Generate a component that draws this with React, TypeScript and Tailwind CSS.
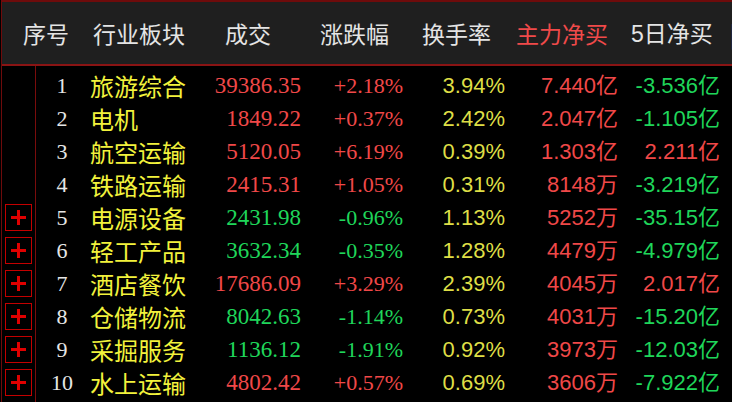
import React from "react";

type Row = {
  n: number;
  name: string;
  vol: string;
  chg: string;
  turn: string;
  main: string;
  mainUp: boolean;
  five: string;
  fiveUp: boolean;
  plus: boolean;
};

const rows: Row[] = [
  { n: 1, name: "旅游综合", vol: "39386.35", chg: "+2.18%", turn: "3.94%", main: "7.440亿", mainUp: true, five: "-3.536亿", fiveUp: false, plus: false },
  { n: 2, name: "电机", vol: "1849.22", chg: "+0.37%", turn: "2.42%", main: "2.047亿", mainUp: true, five: "-1.105亿", fiveUp: false, plus: false },
  { n: 3, name: "航空运输", vol: "5120.05", chg: "+6.19%", turn: "0.39%", main: "1.303亿", mainUp: true, five: "2.211亿", fiveUp: true, plus: false },
  { n: 4, name: "铁路运输", vol: "2415.31", chg: "+1.05%", turn: "0.31%", main: "8148万", mainUp: true, five: "-3.219亿", fiveUp: false, plus: false },
  { n: 5, name: "电源设备", vol: "2431.98", chg: "-0.96%", turn: "1.13%", main: "5252万", mainUp: true, five: "-35.15亿", fiveUp: false, plus: true },
  { n: 6, name: "轻工产品", vol: "3632.34", chg: "-0.35%", turn: "1.28%", main: "4479万", mainUp: true, five: "-4.979亿", fiveUp: false, plus: true },
  { n: 7, name: "酒店餐饮", vol: "17686.09", chg: "+3.29%", turn: "2.39%", main: "4045万", mainUp: true, five: "2.017亿", fiveUp: true, plus: true },
  { n: 8, name: "仓储物流", vol: "8042.63", chg: "-1.14%", turn: "0.73%", main: "4031万", mainUp: true, five: "-15.20亿", fiveUp: false, plus: true },
  { n: 9, name: "采掘服务", vol: "1136.12", chg: "-1.91%", turn: "0.92%", main: "3973万", mainUp: true, five: "-12.03亿", fiveUp: false, plus: true },
  { n: 10, name: "水上运输", vol: "4802.42", chg: "+0.57%", turn: "0.69%", main: "3606万", mainUp: true, five: "-7.922亿", fiveUp: false, plus: true },
];

const cjk = "font-['Noto_Sans_CJK_SC',sans-serif]";
const serif = "font-['Liberation_Serif','Noto_Sans_CJK_SC',serif]";
const sans = "font-['Liberation_Sans','Noto_Sans_CJK_SC',sans-serif]";

function PlusBox() {
  return (
    <div className="relative w-[27px] h-[27px] border border-[#c40000]">
      <span className="absolute left-[5px] top-[11px] w-[15px] h-[3px] bg-[#e00000]" />
      <span className="absolute left-[11px] top-[5px] w-[3px] h-[15px] bg-[#e00000]" />
    </div>
  );
}

export default function App() {
  const red = "text-[#f04848]";
  const green = "text-[#1fd65a]";
  return (
    <div className="w-[732px] h-[402px] bg-black overflow-hidden">
      <div className="ml-px h-full flex flex-col border-l border-t-2 border-[#6e0b0b]">
        {/* header */}
        <div
          className={`h-[64px] shrink-0 bg-[#1f1f1f] border-b-2 border-[#8a1414] flex items-center whitespace-nowrap text-[23px] leading-none text-[#e4e4e4] ${cjk}`}
        >
          <span className="w-[21px] shrink-0" />
          <span className="w-[70px] shrink-0">序号</span>
          <span className="w-[132px] shrink-0">行业板块</span>
          <span className="w-[95px] shrink-0">成交</span>
          <span className="w-[102px] shrink-0">涨跌幅</span>
          <span className="w-[94px] shrink-0">换手率</span>
          <span className="w-[115px] shrink-0 text-[#f04a4a]">主力净买</span>
          <span className="w-[99px] shrink-0">
            <span className={sans}>5</span>日净买
          </span>
          <span className="shrink-0">|</span>
        </div>
        {/* body */}
        <div className="flex-1 flex">
          <div className="w-[34px] shrink-0 border-r border-[#7a0c0c] pt-[3px] flex flex-col">
            {rows.map((r) => (
              <div key={r.n} className="h-[33px] flex items-center pl-[3px]">
                {r.plus ? <PlusBox /> : null}
              </div>
            ))}
          </div>
          <div className="flex-1 pt-[3px] flex flex-col">
            {rows.map((r) => {
              const up = r.chg.startsWith("+");
              const c = up ? red : green;
              return (
                <div key={r.n} className="h-[33px] flex items-center whitespace-nowrap leading-none">
                  <span className={`w-[52px] text-center text-[22px] text-[#e6e6e6] ${serif}`}>{r.n}</span>
                  <span className={`w-[120px] pl-[2px] text-[24px] text-[#f2f23c] ${cjk}`}>{r.name}</span>
                  <span className={`w-[93px] text-right text-[23px] ${c} ${serif}`}>{r.vol}</span>
                  <span className={`w-[102px] text-right text-[22px] ${c} ${serif}`}>{r.chg}</span>
                  <span className={`w-[102px] text-right text-[22px] text-[#dede46] ${sans}`}>{r.turn}</span>
                  <span className={`w-[113px] text-right text-[22px] ${r.mainUp ? red : green} ${sans}`}>{r.main}</span>
                  <span className={`w-[102px] text-right text-[22px] ${r.fiveUp ? red : green} ${sans}`}>{r.five}</span>
                </div>
              );
            })}
          </div>
        </div>
      </div>
    </div>
  );
}
